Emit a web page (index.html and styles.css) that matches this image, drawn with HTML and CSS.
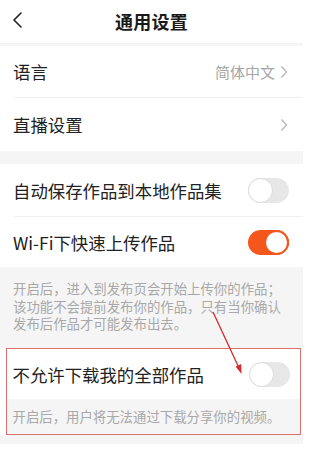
FILE: index.html
```html
<!DOCTYPE html>
<html lang="zh-CN">
<head>
<meta charset="utf-8">
<link rel="stylesheet" href="styles.css">
</head>
<body>
<div class="page">
  <header class="header">
    <svg class="back" width="12" height="18" viewBox="0 0 12 18"><polyline points="9,2 2,9 9,16" fill="none" stroke="#222" stroke-width="1.6" stroke-linecap="round" stroke-linejoin="round"/></svg>
    <div class="title">通用设置</div>
  </header>
  <div class="gap gap-top"></div>
  <section class="group">
    <div class="row row-lang">
      <span class="label">语言</span>
      <span class="value">简体中文<svg class="chev" width="8" height="14" viewBox="0 0 8 14"><polyline points="1.5,1.5 6.5,7 1.5,12.5" fill="none" stroke="#b5b5b5" stroke-width="1.2"/></svg></span>
    </div>
    <div class="divider"></div>
    <div class="row row-live">
      <span class="label">直播设置</span>
      <span class="value"><svg class="chev" width="8" height="14" viewBox="0 0 8 14"><polyline points="1.5,1.5 6.5,7 1.5,12.5" fill="none" stroke="#b5b5b5" stroke-width="1.2"/></svg></span>
    </div>
  </section>
  <div class="gap gap-mid"></div>
  <section class="group">
    <div class="row row-save">
      <span class="label">自动保存作品到本地作品集</span>
      <span class="toggle"><span class="knob"></span></span>
    </div>
    <div class="divider"></div>
    <div class="row row-wifi">
      <span class="label">Wi-Fi下快速上传作品</span>
      <span class="toggle on"><span class="knob"></span></span>
    </div>
  </section>
  <div class="desc desc-wifi">开启后，进入到发布页会开始上传你的作品；<br>该功能不会提前发布你的作品，只有当你确认<br>发布后作品才可能发布出去。</div>
  <div class="highlight">
    <div class="row row-dl">
      <span class="label">不允许下载我的全部作品</span>
      <span class="toggle"><span class="knob"></span></span>
    </div>
    <div class="desc desc-dl">开启后，用户将无法通过下载分享你的视频。</div>
  </div>
  <div class="tail"></div>
  <svg class="arrow" width="310" height="449" viewBox="0 0 310 449">
    <line x1="213" y1="312" x2="239" y2="368" stroke="#d42a2a" stroke-width="1.3"/>
    <polygon points="241.5,374 235.6,366.5 241.2,364" fill="#d42a2a"/>
  </svg>
</div>
</body>
</html>
```
FILE: styles.css
```css
html, body {
  margin: 0;
  padding: 0;
  background: #fff;
}
body {
  font-family: "Noto Sans CJK SC", "Noto Sans", sans-serif;
  color: #222;
}
.page {
  position: relative;
  width: 303px;
  height: 449px;
  overflow: hidden;
  display: flex;
  flex-direction: column;
}
.header {
  height: 43px;
  flex: none;
  display: flex;
  align-items: center;
  justify-content: center;
  position: relative;
  background: #fff;
}
.back {
  position: absolute;
  left: 12px;
  top: 11px;
}
.title {
  font-size: 18px;
  font-weight: 700;
  color: #1a1a1a;
  letter-spacing: 0.3px;
  margin-top: -2px;
}
.gap {
  flex: none;
  background: #f5f5f5;
}
.gap-top { height: 3px; }
.gap-mid { height: 13px; }
.group {
  background: #fff;
  flex: none;
}
.row {
  display: flex;
  align-items: center;
  justify-content: space-between;
  padding: 0 14px 0 13px;
  background: #fff;
}
.row-lang { height: 51px; }
.row-live { height: 53px; }
.row-save { height: 52px; }
.row-wifi { height: 50px; }
.label {
  font-size: 17.4px;
  color: #222;
}
.value {
  display: flex;
  align-items: center;
  gap: 5px;
  font-size: 15px;
  color: #a6a6a6;
  margin-right: 1px;
}
.chev { display: block; }
.divider {
  height: 1px;
  margin-left: 14px;
  background: #f0f0f0;
}
.toggle {
  position: relative;
  width: 41px;
  height: 25px;
  border-radius: 13px;
  background: #e7e7e7;
  flex: none;
  box-sizing: border-box;
}
.toggle .knob {
  position: absolute;
  left: 0;
  top: 0;
  width: 25px;
  height: 25px;
  border-radius: 50%;
  background: #fff;
  border: 1px solid #dcdcdc;
  box-sizing: border-box;
}
.toggle.on {
  background: #f4561c;
}
.toggle.on .knob {
  left: auto;
  right: 0;
  border: 2px solid #f4561c;
}
.desc {
  background: #f5f5f5;
  color: #a8a8a8;
  font-size: 13.4px;
  line-height: 17.5px;
  flex: none;
}
.desc-wifi {
  padding: 13px 0 15.5px 13px;
}
.highlight {
  flex: none;
  margin-left: 6px;
  width: 295px;
  border: 1.5px solid #d87070;
  box-sizing: border-box;
  background: #f5f5f5;
}
.row-dl {
  height: 50px;
  padding: 0 10.5px 0 5.5px;
}
.desc-dl {
  padding: 8.5px 0 8.5px 5.5px;
}
.tail {
  height: 9px;
  flex: none;
  background: #f5f5f5;
}
.arrow {
  position: absolute;
  left: 0;
  top: 0;
  pointer-events: none;
}
```
